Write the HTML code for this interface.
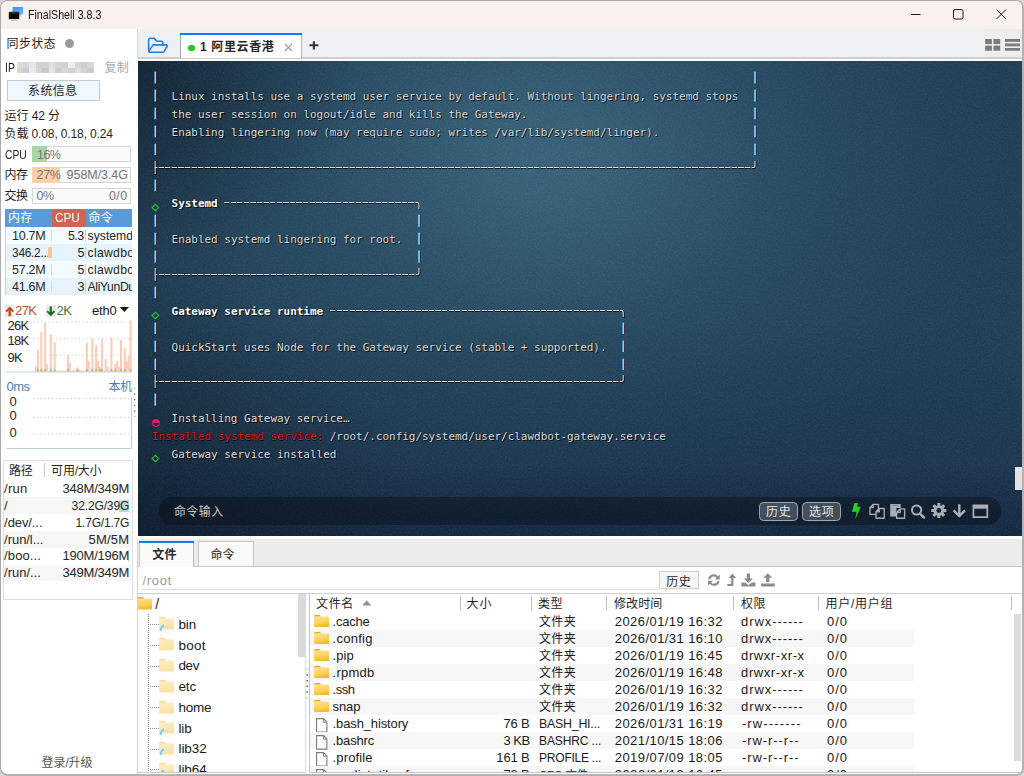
<!DOCTYPE html>
<html lang="zh-CN"><head><meta charset="utf-8"><title>FinalShell 3.8.3</title><style>
html,body{margin:0;padding:0}
body{width:1024px;height:776px;overflow:hidden;background:#d6d6d6;position:relative;
 font-family:"Liberation Sans","Noto Sans CJK SC",sans-serif;font-size:12.5px;color:#1e1e1e}
.a{position:absolute}
.t{position:absolute;white-space:pre;line-height:20px;height:20px;margin-left:-.4px}
.cj{font-size:12px}
.b{font-weight:bold}
svg{position:absolute;overflow:visible}
#win{position:absolute;left:0;top:0;width:1021px;height:773px;border:solid #a9a9a9;border-width:1px 2px 2px 1px;border-right-color:#b3b3b3;border-bottom-color:#b3b3b3;border-radius:8px;overflow:hidden;background:#fff}
#in{position:absolute;left:-1px;top:-1px;width:1024px;height:776px}
#title{left:0;top:0;width:1024px;height:29px;background:#f9f1ee}
#tabbar{left:138px;top:29px;width:886px;height:28px;background:#eff0f4}
#term{left:137.5px;top:61px;width:885px;height:475px;overflow:hidden;background:#1d3448}
.tl{position:absolute;left:14.3px;white-space:pre;font-family:"DejaVu Sans Mono","Liberation Mono",monospace;font-size:11px;line-height:18px;height:18px;color:#dedede;text-shadow:1px 1px 0 rgba(0,0,0,.75),0 0 1px rgba(0,0,0,.8);letter-spacing:-.032px}
.tl b{color:#fff}
.bx{color:#d9dadb}
.hz{color:#eceded;position:relative;top:-1px;display:inline-block;-webkit-mask-image:repeating-linear-gradient(90deg,#000 0,#000 5.3px,rgba(0,0,0,.3) 5.3px,rgba(0,0,0,.3) 6.588px);mask-image:repeating-linear-gradient(90deg,#000 0,#000 5.3px,rgba(0,0,0,.3) 5.3px,rgba(0,0,0,.3) 6.588px)}
.vp{color:#fff;display:inline-block;clip-path:inset(0 0 4.6px 0);-webkit-text-stroke:.18px #fff}
.dia{color:#2fbf2f;position:relative;top:4px;left:.3px;text-shadow:none;font-weight:bold;font-size:13.5px;margin:0 -.77px;line-height:1px}
.spin{color:#ee1a5e;position:relative;top:4px;left:.3px;text-shadow:none;font-size:12.4px;margin:0 -.44px;line-height:1px}
.red{color:#e01c1c}
</style></head><body><div id="win"><div id="in">
<div id="title" class="a"></div>
<svg style="left:8px;top:6px" width="17" height="17" viewBox="0 0 17 17">
<defs><linearGradient id="gb" x1="0" y1="0" x2="1" y2="1"><stop offset="0" stop-color="#2f8ef2"></stop><stop offset="1" stop-color="#6dbcfa"></stop></linearGradient>
<linearGradient id="gk" x1="0" y1="0" x2="0" y2="1"><stop offset="0" stop-color="#3a3a3a"></stop><stop offset=".5" stop-color="#000"></stop><stop offset="1" stop-color="#111"></stop></linearGradient></defs>
<rect x="4.6" y="1" width="10.5" height="7.4" fill="url(#gb)"></rect>
<rect x="11" y="8.4" width="3" height=".8" fill="#9cc8ee"></rect>
<rect x=".8" y="5.7" width="10.5" height="7.4" fill="url(#gk)"></rect>
<rect x="2.5" y="14" width="7" height="1" fill="#c9c6c4"></rect><rect x="5" y="13.1" width="2" height="1" fill="#d8d4d2"></rect>
</svg>
<div class="t " style="left: 28.3px; font-size: 12px; color: rgb(21, 21, 21); letter-spacing: 0px; transform-origin: 0px 50%; transform: scaleX(0.887); top: 4.8px;">FinalShell 3.8.3</div>
<svg style="left:905px;top:5px" width="110" height="20" viewBox="905 5 110 20" fill="none" stroke="#1c1c1c" stroke-width="1">
<path d="M910.7 14.5H920.6"></path>
<rect x="953.5" y="9.5" width="9.5" height="9.5" rx="1.6"></rect>
<path d="M996.5 9.5L1006 19M1006 9.5L996.5 19"></path></svg>
<div class="a" style="left:137px;top:29px;width:1px;height:29px;background:#dcdcdc"></div>
<div class="a" style="left:137px;top:540px;width:1px;height:236px;background:#d4d4d4"></div>
<div class="t cj" style="left: 7px; letter-spacing: 0.32px; top: 33.5px;">同步状态</div>
<div class="a" style="left:65px;top:39px;width:9px;height:9px;border-radius:5px;background:#9a9a9a"></div>
<div class="t " style="left: 5px; font-size: 12.5px; letter-spacing: 0px; transform-origin: 0px 50%; transform: scaleX(0.83); top: 57.8px;">IP</div>
<div class="a" style="left:16.5px;top:62px;width:77px;height:11px;overflow:hidden;filter:blur(.5px)"><div class="a" style="left:0.00px;top:0;width:6.6px;height:6px;background:#e3dcd6"></div><div class="a" style="left:0.00px;top:6px;width:6.6px;height:5px;background:#d8d2cc"></div><div class="a" style="left:6.45px;top:0;width:6.6px;height:6px;background:#d3d6da"></div><div class="a" style="left:6.45px;top:6px;width:6.6px;height:5px;background:#c9ced6"></div><div class="a" style="left:12.90px;top:0;width:6.6px;height:6px;background:#e6e6e8"></div><div class="a" style="left:12.90px;top:6px;width:6.6px;height:5px;background:#ecebe8"></div><div class="a" style="left:19.35px;top:0;width:6.6px;height:6px;background:#d6d0cd"></div><div class="a" style="left:19.35px;top:6px;width:6.6px;height:5px;background:#dcd6d2"></div><div class="a" style="left:25.80px;top:0;width:6.6px;height:6px;background:#cfd3d8"></div><div class="a" style="left:25.80px;top:6px;width:6.6px;height:5px;background:#c6c8ce"></div><div class="a" style="left:32.25px;top:0;width:6.6px;height:6px;background:#dfe0e2"></div><div class="a" style="left:32.25px;top:6px;width:6.6px;height:5px;background:#e4e6e6"></div><div class="a" style="left:38.70px;top:0;width:6.6px;height:6px;background:#d9d3cf"></div><div class="a" style="left:38.70px;top:6px;width:6.6px;height:5px;background:#cfcbc9"></div><div class="a" style="left:45.15px;top:0;width:6.6px;height:6px;background:#cfd2d4"></div><div class="a" style="left:45.15px;top:6px;width:6.6px;height:5px;background:#d6d8dc"></div><div class="a" style="left:51.60px;top:0;width:6.6px;height:6px;background:#eeeeec"></div><div class="a" style="left:51.60px;top:6px;width:6.6px;height:5px;background:#d2d2d2"></div><div class="a" style="left:58.05px;top:0;width:6.6px;height:6px;background:#d9d6d6"></div><div class="a" style="left:58.05px;top:6px;width:6.6px;height:5px;background:#dcdfe4"></div><div class="a" style="left:64.50px;top:0;width:6.6px;height:6px;background:#cfcfcf"></div><div class="a" style="left:64.50px;top:6px;width:6.6px;height:5px;background:#d8d4c8"></div><div class="a" style="left:70.95px;top:0;width:6.6px;height:6px;background:#d8d8dc"></div><div class="a" style="left:70.95px;top:6px;width:6.6px;height:5px;background:#c8ccd4"></div></div>
<div class="t cj" style="left: 105px; color: rgb(169, 169, 169); letter-spacing: 0.14px; top: 58px;">复制</div>
<div class="a" style="left:7px;top:80px;width:90.6px;height:19px;border:1px solid #c3c9cf;background:#eff8fe"></div>
<div class="t cj" style="left: 28.5px; letter-spacing: 0.32px; top: 81.3px;">系统信息</div>
<div class="t cj" style="left: 5px; letter-spacing: -0.1px; top: 106px;">运行 42 分</div>
<div class="t cj" style="left: 5px; letter-spacing: -0.13px; top: 124.3px;">负载 0.08, 0.18, 0.24</div>
<div class="t " style="left: 5px; font-size: 12.3px; letter-spacing: 0px; transform-origin: 0px 50%; transform: scaleX(0.839); top: 144.5px;">CPU</div><div class="a" style="left:32px;top:146px;width:96.8px;height:14px;border:1px solid #d6d6d6;background:#fafafa"></div><div class="a" style="left:32px;top:146px;width:15.2px;height:16px;background:#a6d7a8"></div><div class="t " style="left: 37.5px; color: rgb(117, 117, 117); letter-spacing: -0.58px; top: 144.5px;">16%</div>
<div class="t cj" style="left: 5px; letter-spacing: -0.61px; top: 165.2px;">内存</div><div class="a" style="left:32px;top:167px;width:96.8px;height:14px;border:1px solid #d6d6d6;background:#fafafa"></div><div class="a" style="left:32px;top:167px;width:27.5px;height:16px;background:#fdd0a9"></div><div class="t " style="left: 37px; color: rgb(117, 117, 117); letter-spacing: -0.41px; top: 165.2px;">27%</div><div class="t " style="left: 67px; color: rgb(117, 117, 117); letter-spacing: -0.06px; top: 165.2px;">958M/3.4G</div>
<div class="t cj" style="left: 5px; letter-spacing: -0.61px; top: 185.9px;">交换</div><div class="a" style="left:32px;top:187.6px;width:96.8px;height:14px;border:1px solid #d6d6d6;background:#fafafa"></div><div class="t " style="left: 37px; color: rgb(117, 117, 117); letter-spacing: -0.64px; top: 185.9px;">0%</div><div class="t " style="left: 109.5px; color: rgb(117, 117, 117); letter-spacing: 0.3px; top: 185.9px;">0/0</div>
<div class="a" style="left:5px;top:208.5px;width:127px;height:86px;background:#f4fbfe;box-shadow:inset 0 0 0 1px #b9d6ee"></div>
<div class="a" style="left:5px;top:208.5px;width:47px;height:18.5px;background:#5b9bd5"></div>
<div class="a" style="left:52px;top:208.5px;width:34px;height:18.5px;background:#cd6652"></div>
<div class="a" style="left:86px;top:208.5px;width:46px;height:18.5px;background:#5b9bd5"></div>
<div class="t cj" style="left: 8.5px; color: rgb(255, 255, 255); letter-spacing: 0.14px; top: 208.2px;">内存</div>
<div class="t " style="left: 55px; font-size: 12.5px; color: rgb(255, 255, 255); letter-spacing: 0px; transform-origin: 0px 50%; transform: scaleX(0.939); top: 208px;">CPU</div>
<div class="t cj" style="left: 89px; color: rgb(255, 255, 255); letter-spacing: 0.14px; top: 208.2px;">命令</div>
<div class="a" style="left:6px;top:227px;width:125.5px;height:17px;background:#f4fbfe"></div>
<div class="t " style="left: 12.5px; color: rgb(38, 38, 38); letter-spacing: -0.29px; top: 226.3px;">10.7M</div>
<div class="t " style="left: 68.5px; color: rgb(38, 38, 38); letter-spacing: -0.7px; top: 226.3px;">5.3</div>
<div class="a" style="left:51px;top:230px;width:1px;height:11px;background:#f8d5b8"></div>
<div class="a" style="left:85.3px;top:230px;width:1px;height:11px;background:#b5dcb6"></div>
<div class="a" style="left:88px;top:227px;width:43.5px;height:17px;overflow:hidden"><div class="t " style="left: 0px; font-size: 12.2px; color: rgb(38, 38, 38); letter-spacing: 0px; top: -0.7px;">systemd</div></div>
<div class="a" style="left:6px;top:244px;width:125.5px;height:17px;background:#e6f3fa"></div>
<div class="t " style="left: 12.5px; color: rgb(38, 38, 38); letter-spacing: -0.29px; font-size: 11.88px; top: 243.25px;">346.2...</div>
<div class="t " style="left: 78px; color: rgb(38, 38, 38); letter-spacing: -0.65px; top: 243.25px;">5</div>
<div class="a" style="left:48.3px;top:247px;width:3.7px;height:11px;background:#f6c79f"></div>
<div class="a" style="left:85.3px;top:247px;width:1px;height:11px;background:#b5dcb6"></div>
<div class="a" style="left:88px;top:244px;width:43.5px;height:17px;overflow:hidden"><div class="t " style="left: 0px; font-size: 12.2px; color: rgb(38, 38, 38); letter-spacing: 0.28px; top: -0.75px;">clawdbot</div></div>
<div class="a" style="left:6px;top:261px;width:125.5px;height:17px;background:#f4fbfe"></div>
<div class="t " style="left: 12.5px; color: rgb(38, 38, 38); letter-spacing: -0.29px; top: 260.2px;">57.2M</div>
<div class="t " style="left: 78px; color: rgb(38, 38, 38); letter-spacing: -0.65px; top: 260.2px;">5</div>
<div class="a" style="left:51px;top:264px;width:1px;height:11px;background:#f8d5b8"></div>
<div class="a" style="left:85.3px;top:264px;width:1px;height:11px;background:#b5dcb6"></div>
<div class="a" style="left:88px;top:261px;width:43.5px;height:17px;overflow:hidden"><div class="t " style="left: 0px; font-size: 12.2px; color: rgb(38, 38, 38); letter-spacing: 0.28px; top: -0.8px;">clawdbot</div></div>
<div class="a" style="left:6px;top:278px;width:125.5px;height:17px;background:#e6f3fa"></div>
<div class="t " style="left: 12.5px; color: rgb(38, 38, 38); letter-spacing: -0.29px; top: 277.15px;">41.6M</div>
<div class="t " style="left: 78px; color: rgb(38, 38, 38); letter-spacing: -0.65px; top: 277.15px;">3</div>
<div class="a" style="left:51px;top:281px;width:1px;height:11px;background:#f8d5b8"></div>
<div class="a" style="left:85.3px;top:281px;width:1px;height:11px;background:#b5dcb6"></div>
<div class="a" style="left:88px;top:278px;width:43.5px;height:17px;overflow:hidden"><div class="t " style="left: 0px; font-size: 12.2px; color: rgb(38, 38, 38); letter-spacing: -0.38px; top: -0.85px;">AliYunDun</div></div>
<div class="a" style="left:5px;top:305.3px;width:9.3px;height:11.3px;background:#e9e9e9"></div>
<svg style="left:5px;top:305px" width="10" height="12" viewBox="0 0 10 12"><path d="M4.7 1.4L9 5.9L7.7 7.2L5.8 5.3V11.3H3.6V5.3L1.7 7.2L.4 5.9Z" fill="#c2410c"></path></svg>
<div class="t " style="left: 15.5px; font-size: 13px; color: rgb(180, 83, 47); letter-spacing: -0.61px; top: 300.8px;">27K</div>
<div class="a" style="left:46px;top:305.3px;width:9.5px;height:11.3px;background:#e9e9e9"></div>
<svg style="left:46px;top:305px" width="10" height="12" viewBox="0 0 10 12"><path d="M4.8 11.2L9.1 6.7L7.8 5.4L5.9 7.3V1.5H3.7V7.3L1.8 5.4L.5 6.7Z" fill="#1c6b1c"></path></svg>
<div class="t " style="left: 57px; font-size: 13px; color: rgb(59, 124, 59); letter-spacing: -0.55px; top: 300.8px;">2K</div>
<div class="t " style="left: 92.5px; font-size: 13px; color: rgb(26, 26, 26); letter-spacing: -0.25px; top: 300.8px;">eth0</div>
<svg style="left:119px;top:306px" width="11" height="7" viewBox="0 0 11 7"><path d="M.6 .9H10L5.3 5.9Z" fill="#1a1a1a"></path></svg>
<div class="t " style="left: 8px; font-size: 13px; color: rgb(38, 38, 38); letter-spacing: -0.78px; top: 315.9px;">26K</div>
<div class="t " style="left: 8px; font-size: 13px; color: rgb(38, 38, 38); letter-spacing: -0.78px; top: 331.2px;">18K</div>
<div class="t " style="left: 8px; font-size: 13px; color: rgb(38, 38, 38); letter-spacing: -0.8px; top: 347.6px;">9K</div>
<svg style="left:0;top:295px" width="138" height="80" viewBox="0 0 138 80"><path d="M33.5 27H130" stroke="#c4c4c4" stroke-width="1" stroke-dasharray="1 2.8"></path><path d="M33.5 43.8H130" stroke="#c4c4c4" stroke-width="1" stroke-dasharray="1 2.8"></path><path d="M33.5 60.2H130" stroke="#c4c4c4" stroke-width="1" stroke-dasharray="1 2.8"></path><rect x="34.9" y="75.47" width="96.7" height="1.37" fill="#fdd3bf"></rect><rect x="34.86" y="71.10" width="1.95" height="5.74" fill="#fccbb3"></rect><rect x="36.92" y="54.69" width="1.95" height="22.15" fill="#fccbb3"></rect><rect x="40.33" y="36.92" width="1.95" height="39.92" fill="#fccbb3"></rect><rect x="44.16" y="28.03" width="1.95" height="48.81" fill="#fccbb3"></rect><rect x="46.21" y="69.05" width="1.95" height="7.79" fill="#fccbb3"></rect><rect x="49.90" y="39.65" width="1.95" height="37.19" fill="#fccbb3"></rect><rect x="53.73" y="47.17" width="1.95" height="29.67" fill="#fccbb3"></rect><rect x="66.99" y="59.47" width="1.95" height="17.36" fill="#fccbb3"></rect><rect x="68.77" y="67.95" width="1.95" height="8.89" fill="#fccbb3"></rect><rect x="72.46" y="74.51" width="1.95" height="2.32" fill="#fccbb3"></rect><rect x="76.29" y="72.46" width="1.95" height="4.38" fill="#fccbb3"></rect><rect x="78.21" y="74.51" width="1.95" height="2.32" fill="#fccbb3"></rect><rect x="85.86" y="47.85" width="1.95" height="28.99" fill="#fccbb3"></rect><rect x="87.78" y="66.04" width="1.95" height="10.80" fill="#fccbb3"></rect><rect x="91.33" y="43.48" width="1.95" height="33.36" fill="#fccbb3"></rect><rect x="95.16" y="49.90" width="1.95" height="26.93" fill="#fccbb3"></rect><rect x="97.07" y="66.04" width="1.95" height="10.80" fill="#fccbb3"></rect><rect x="98.99" y="71.78" width="1.95" height="5.06" fill="#fccbb3"></rect><rect x="100.90" y="44.16" width="1.95" height="32.68" fill="#fccbb3"></rect><rect x="104.73" y="63.99" width="1.95" height="12.85" fill="#fccbb3"></rect><rect x="106.64" y="71.78" width="1.95" height="5.06" fill="#fccbb3"></rect><rect x="110.47" y="42.66" width="1.95" height="34.18" fill="#fccbb3"></rect><rect x="114.30" y="69.05" width="1.95" height="7.79" fill="#fccbb3"></rect><rect x="116.22" y="66.04" width="1.95" height="10.80" fill="#fccbb3"></rect><rect x="118.13" y="71.78" width="1.95" height="5.06" fill="#fccbb3"></rect><rect x="120.04" y="45.12" width="1.95" height="31.72" fill="#fccbb3"></rect><rect x="123.87" y="52.91" width="1.95" height="23.93" fill="#fccbb3"></rect><rect x="125.79" y="66.04" width="1.95" height="10.80" fill="#fccbb3"></rect><rect x="127.70" y="61.12" width="1.95" height="15.72" fill="#fccbb3"></rect><rect x="129.61" y="25.29" width="1.95" height="51.54" fill="#fccbb3"></rect><rect x="36.92" y="73.83" width="1.95" height="3.01" fill="#c2b781"></rect><rect x="40.33" y="73.83" width="1.95" height="3.01" fill="#c2b781"></rect><rect x="44.16" y="73.83" width="1.95" height="3.01" fill="#c2b781"></rect><rect x="49.90" y="73.83" width="1.95" height="3.01" fill="#c2b781"></rect><rect x="53.73" y="73.83" width="1.95" height="3.01" fill="#c2b781"></rect><rect x="66.99" y="73.83" width="1.95" height="3.01" fill="#c2b781"></rect><rect x="85.86" y="73.83" width="1.95" height="3.01" fill="#c2b781"></rect><rect x="91.33" y="73.83" width="1.95" height="3.01" fill="#c2b781"></rect><rect x="95.16" y="73.83" width="1.95" height="3.01" fill="#c2b781"></rect><rect x="100.90" y="73.83" width="1.95" height="3.01" fill="#c2b781"></rect><rect x="110.47" y="73.83" width="1.95" height="3.01" fill="#c2b781"></rect><rect x="114.30" y="73.83" width="1.95" height="3.01" fill="#c2b781"></rect><rect x="120.04" y="73.83" width="1.95" height="3.01" fill="#c2b781"></rect><rect x="123.87" y="73.83" width="1.95" height="3.01" fill="#c2b781"></rect><rect x="129.61" y="73.83" width="1.95" height="3.01" fill="#c2b781"></rect><rect x="76.29" y="73.83" width="1.95" height="3.01" fill="#c2b781"></rect><rect x="98.99" y="73.83" width="1.95" height="3.01" fill="#c2b781"></rect><path d="M5 77H132" stroke="#bdd9e8" stroke-width="1"></path></svg>
<div class="t " style="left: 7px; font-size: 13px; color: rgb(76, 126, 179); letter-spacing: -0.59px; top: 377px;">0ms</div>
<div class="t cj" style="left: 109px; color: rgb(76, 126, 179); letter-spacing: -0.36px; top: 376.6px;">本机</div>
<div class="t " style="left: 10px; font-size: 13px; color: rgb(38, 38, 38); letter-spacing: 0.07px; top: 391.8px;">0</div>
<div class="t " style="left: 10px; font-size: 13px; color: rgb(38, 38, 38); letter-spacing: 0.07px; top: 405.9px;">0</div>
<div class="t " style="left: 10px; font-size: 13px; color: rgb(38, 38, 38); letter-spacing: 0.07px; top: 423px;">0</div>
<svg style="left:0;top:380px" width="138" height="72" viewBox="0 380 138 72"><path d="M33 398.5H129.5" stroke="#c4c4c4" stroke-width="1" stroke-dasharray="1 2.8"></path><path d="M33 417.3H129.5" stroke="#c4c4c4" stroke-width="1" stroke-dasharray="1 2.8"></path><path d="M33 434H129.5" stroke="#c4c4c4" stroke-width="1" stroke-dasharray="1 2.8"></path><path d="M131.5 397V448.5H6.5" stroke="#b9cddb" stroke-width="1" fill="none"></path><rect x="133.9" y="387.7" width="1.4" height="1.4" fill="#c0c0c0"></rect><rect x="133.9" y="393.4" width="1.4" height="1.4" fill="#6a6a6a"></rect><rect x="133.9" y="399.0" width="1.4" height="1.4" fill="#6a6a6a"></rect><rect x="133.9" y="404.7" width="1.4" height="1.4" fill="#6a6a6a"></rect><rect x="133.9" y="410.29999999999995" width="1.4" height="1.4" fill="#6a6a6a"></rect><rect x="133.9" y="415.9" width="1.4" height="1.4" fill="#c0c0c0"></rect></svg>
<div class="a" style="left:2.5px;top:460.4px;width:128.5px;height:137.6px;border:1px solid #dedede"></div>
<div class="a" style="left:44.3px;top:463px;width:1px;height:14px;background:#c9c9c9"></div>
<div class="t cj" style="left: 9.5px; color: rgb(38, 38, 38); letter-spacing: -0.36px; top: 461px;">路径</div>
<div class="t cj" style="left: 51.5px; color: rgb(38, 38, 38); letter-spacing: -0.21px; top: 461px;">可用/大小</div>
<div class="t " style="left: 4.5px; font-size: 13px; color: rgb(38, 38, 38); letter-spacing: 0.22px; top: 479.2px;">/run</div>
<div class="t " style="left: 63px; font-size: 13px; color: rgb(38, 38, 38); letter-spacing: -0.23px; top: 479.2px;">348M/349M</div>
<div class="a" style="left:3.5px;top:497.4px;width:128px;height:16.8px;background:#f6f6f6"></div>
<div class="a" style="left:118.5px;top:499.5px;width:10.5px;height:12.5px;background:#bbd9d2"></div>
<div class="t " style="left: 4.5px; font-size: 13px; color: rgb(38, 38, 38); letter-spacing: 1.67px; top: 496px;">/</div>
<div class="t " style="left: 72px; font-size: 12.05px; color: rgb(38, 38, 38); letter-spacing: -0.15px; top: 496px;">32.2G/39G</div>
<div class="t " style="left: 4.5px; font-size: 13px; color: rgb(38, 38, 38); letter-spacing: -0.09px; top: 512.8px;">/dev/...</div>
<div class="t " style="left: 76px; font-size: 12.05px; color: rgb(38, 38, 38); letter-spacing: -0.22px; top: 512.8px;">1.7G/1.7G</div>
<div class="a" style="left:3.5px;top:531.0px;width:128px;height:16.8px;background:#f6f6f6"></div>
<div class="t " style="left: 4.5px; font-size: 13px; color: rgb(38, 38, 38); letter-spacing: -0.05px; top: 529.6px;">/run/l...</div>
<div class="t " style="left: 89px; font-size: 13px; color: rgb(38, 38, 38); letter-spacing: 0.17px; top: 529.6px;">5M/5M</div>
<div class="a" style="left:128.2px;top:549.8px;width:.8px;height:12.5px;background:#bbd9d2"></div>
<div class="t " style="left: 4.5px; font-size: 13px; color: rgb(38, 38, 38); letter-spacing: 0.09px; top: 546.4px;">/boo...</div>
<div class="t " style="left: 63px; font-size: 13px; color: rgb(38, 38, 38); letter-spacing: -0.23px; top: 546.4px;">190M/196M</div>
<div class="a" style="left:3.5px;top:564.6px;width:128px;height:16.8px;background:#f6f6f6"></div>
<div class="t " style="left: 4.5px; font-size: 13px; color: rgb(38, 38, 38); letter-spacing: -0.01px; top: 563.2px;">/run/...</div>
<div class="t " style="left: 63px; font-size: 13px; color: rgb(38, 38, 38); letter-spacing: -0.23px; top: 563.2px;">349M/349M</div>
<div class="t cj" style="left: 42px; color: rgb(85, 85, 85); letter-spacing: -0.11px; top: 752.7px;">登录/升级</div>
<div id="tabbar" class="a"></div>
<div class="a" style="left:984px;top:29px;width:40px;height:28px;background:#eeeeee"></div>
<div class="a" style="left:138px;top:57px;width:886px;height:1.6px;background:#cfcfcf"></div>
<svg style="left:146px;top:36px" width="24" height="19" viewBox="146 36 24 19" fill="none" stroke="#1f80e2" stroke-width="1.6" stroke-linejoin="round" stroke-linecap="round">
<path d="M148.6 50.8V40A1.7 1.7 0 0 1 150.3 38.3H154.2L156.8 41.3H161.2A1.7 1.7 0 0 1 162.9 43V44.7"></path>
<path d="M153.9 44.9H166.4A.9 .9 0 0 1 167.2 46.2L164 51.6A1.5 1.5 0 0 1 162.8 52.3H150A1.1 1.1 0 0 1 149.1 50.7L152.6 45.6A1.5 1.5 0 0 1 153.9 44.9Z"></path>
</svg>
<div class="a" style="left:180.3px;top:33px;width:121.4px;height:25.3px;background:#fff;box-shadow:inset 1px 0 0 #a9a9a9,inset -1px 0 0 #b5b5b5"></div>
<div class="a" style="left:180.3px;top:32.9px;width:121.4px;height:1.9px;background:#0b7df0"></div>
<div class="a" style="left:188.4px;top:44.9px;width:6.6px;height:6.6px;border-radius:4px;background:#1ec81e"></div>
<div class="t b" style="left: 200.5px; font-size: 12px; color: rgb(38, 38, 38); letter-spacing: 0.61px; top: 36.6px;">1 阿里云香港</div>
<svg style="left:284px;top:43px" width="9" height="9" viewBox="0 0 9 9"><path d="M.9 .9L8 8M8 .9L.9 8" stroke="#9a9a9a" stroke-width="1.1" fill="none"></path></svg>
<svg style="left:309px;top:41px" width="10" height="9" viewBox="0 0 10 9"><path d="M4.9 .2V8.4M.5 4.3H9.4" stroke="#333" stroke-width="2.1" fill="none"></path></svg>
<svg style="left:985px;top:38px" width="36" height="13" viewBox="985 38 36 13" fill="#7b7b7b">
<rect x="985.2" y="39" width="6.7" height="5.1"></rect><rect x="993.5" y="39" width="6.7" height="5.1"></rect>
<rect x="985.2" y="45.6" width="6.7" height="5.1"></rect><rect x="993.5" y="45.6" width="6.7" height="5.1"></rect>
<rect x="1005" y="39" width="15" height="2.8"></rect><rect x="1005" y="43.5" width="15" height="2.8"></rect><rect x="1005" y="48" width="15" height="2.7"></rect></svg>
<div id="term" class="a"><div class="a" style="left:0;top:0;width:885px;height:475px;background:radial-gradient(ellipse 220px 200px at 0 0,rgba(8,14,22,.46),rgba(8,14,22,0)),radial-gradient(ellipse 280px 260px at 0 100%,rgba(8,14,22,.36),rgba(8,14,22,0)),linear-gradient(to right,rgba(10,18,28,.12),rgba(10,18,28,0) 120px),linear-gradient(to bottom,rgba(6,16,42,0) 400px,rgba(6,16,42,.28) 475px),linear-gradient(to bottom,rgba(10,22,50,0) 260px,rgba(10,22,50,.3) 475px),radial-gradient(ellipse 465px 335px at 408px 100px,rgb(60,103,127) 0,rgb(57,98,121) 15%,rgb(52,90,113) 30%,rgb(43,78,101) 52%,rgb(38,70,93) 80%,rgb(36,66,88) 100%)"></div><svg style="left:0;top:0;opacity:.06" width="885" height="475"><filter id="nz" x="0" y="0" width="100%" height="100%" color-interpolation-filters="sRGB"><feTurbulence type="fractalNoise" baseFrequency=".55" numOctaves="2" seed="7"></feTurbulence><feColorMatrix type="matrix" values="1.3 0 0 0 -.5  1.3 0 0 0 -.4  1.3 0 0 0 -.32  0 0 0 0 1"></feColorMatrix></filter><rect width="885" height="475" filter="url(#nz)"></rect></svg><div class="tl" style="top: 9.1px;"><span class="vp">│</span>                                                                                          <span class="vp">│</span></div><div class="tl" style="top: 27px;"><span class="vp">│</span>  Linux installs use a systemd user service by default. Without lingering, systemd stops  <span class="vp">│</span></div><div class="tl" style="top: 44.9px;"><span class="vp">│</span>  the user session on logout/idle and kills the Gateway.                                  <span class="vp">│</span></div><div class="tl" style="top: 62.8px;"><span class="vp">│</span>  Enabling lingering now (may require sudo; writes /var/lib/systemd/linger).              <span class="vp">│</span></div><div class="tl" style="top: 80.7px;"><span class="vp">│</span>                                                                                          <span class="vp">│</span></div><div class="tl" style="top: 98.6px;"><span class="hz">├──────────────────────────────────────────────────────────────────────────────────────────╯</span></div><div class="tl" style="top: 116.5px;"><span class="vp">│</span></div><div class="tl" style="top: 134.4px;"><span class="dia">◇</span>  <b>Systemd</b> <span class="hz">─────────────────────────────╮</span></div><div class="tl" style="top: 152.3px;"><span class="vp">│</span>                                       <span class="vp">│</span></div><div class="tl" style="top: 170.2px;"><span class="vp">│</span>  Enabled systemd lingering for root.  <span class="vp">│</span></div><div class="tl" style="top: 188.1px;"><span class="vp">│</span>                                       <span class="vp">│</span></div><div class="tl" style="top: 206px;"><span class="hz">├───────────────────────────────────────╯</span></div><div class="tl" style="top: 223.9px;"><span class="vp">│</span></div><div class="tl" style="top: 241.8px;"><span class="dia">◇</span>  <b>Gateway service runtime</b> <span class="hz">────────────────────────────────────────────╮</span></div><div class="tl" style="top: 259.7px;"><span class="vp">│</span>                                                                      <span class="vp">│</span></div><div class="tl" style="top: 277.6px;"><span class="vp">│</span>  QuickStart uses Node for the Gateway service (stable + supported).  <span class="vp">│</span></div><div class="tl" style="top: 295.5px;"><span class="vp">│</span>                                                                      <span class="vp">│</span></div><div class="tl" style="top: 313.4px;"><span class="hz">├──────────────────────────────────────────────────────────────────────╯</span></div><div class="tl" style="top: 331.3px;"><span class="vp">│</span></div><div class="tl" style="top: 349.2px;"><span class="spin">◓</span>  Installing Gateway service…</div><div class="tl" style="top: 367.1px;"><span class="red">Installed systemd service:</span> /root/.config/systemd/user/clawdbot-gateway.service</div><div class="tl" style="top: 385px;"><span class="dia">◇</span>  Gateway service installed</div><div class="a" style="left:877px;top:406px;width:7.5px;height:23px;background:#e2e2e2"></div><div class="a" style="left:21.6px;top:436.2px;width:841.5px;height:27.4px;border-radius:13px;background:rgba(6,12,20,.42)"></div></div>
<div class="t cj" style="left: 174.3px; color: rgb(201, 201, 201); letter-spacing: 0.45px; top: 502.2px;">命令输入</div>
<div class="a" style="left:758.9px;top:502px;width:37.3px;height:16.7px;border:1px solid #a3a7ab;border-radius:4.5px;background:rgba(190,200,210,.28)"></div>
<div class="t cj" style="left: 766.3px; color: rgb(230, 230, 230); letter-spacing: 0.89px; top: 502.2px;">历史</div>
<div class="a" style="left:801.8px;top:502px;width:37.4px;height:16.7px;border:1px solid #a3a7ab;border-radius:4.5px;background:rgba(190,200,210,.28)"></div>
<div class="t cj" style="left: 809.3px; color: rgb(230, 230, 230); letter-spacing: 0.89px; top: 502.2px;">选项</div>
<svg style="left:850px;top:502px" width="140" height="18" viewBox="850 502 140 18">
<path d="M854.2 503.3L858.1 503L857 507.1L860.9 506.8L855.2 519.4L856.6 511.8L852 512.1Z" fill="#1fd21f"></path>
<g fill="none" stroke="#a9aeb6" stroke-width="1.35" stroke-linejoin="round">
<path d="M873.2 504.3H878.4V514.3H870V507.5ZM873.2 504.3V507.5H870"></path>
<path d="M879.2 508.5H884.2V518.2H876V511.7ZM879.2 508.5V511.7H876" fill="#111f2d"></path>
</g>
<path d="M890.2 504H900.7V508H896.4V516.6H890.2Z" fill="#a9aeb6"></path><rect x="892.6" y="504.7" width="5.8" height="1.1" fill="#878c94"></rect>
<path d="M900.2 508.9H904.6V518.2H896.6V512.5ZM900.2 508.9V512.5H896.6" fill="#111f2d" stroke="#a9aeb6" stroke-width="1.35" stroke-linejoin="round"></path>
<circle cx="916.6" cy="510" r="4.6" fill="none" stroke="#a9aeb6" stroke-width="2"></circle><path d="M920 513.6L924 517.6" stroke="#a9aeb6" stroke-width="2.4" stroke-linecap="round"></path>
<g transform="translate(938.8 510.5)" fill="#a9aeb6">
<circle r="5.3"></circle>
<rect x="-1.5" y="-7.6" width="3" height="15.2" rx=".5"></rect>
<rect x="-1.5" y="-7.6" width="3" height="15.2" rx=".5" transform="rotate(45)"></rect><rect x="-1.5" y="-7.6" width="3" height="15.2" rx=".5" transform="rotate(90)"></rect><rect x="-1.5" y="-7.6" width="3" height="15.2" rx=".5" transform="rotate(135)"></rect>
<circle r="2.4" fill="#111f2d"></circle></g>
<path d="M959.3 504.3V515.6M953.6 510.4L959.3 516L965 510.4" fill="none" stroke="#a9aeb6" stroke-width="2.4"></path>
<path d="M973.4 505.4H987.3V517.1H973.4Z" fill="none" stroke="#a9aeb6" stroke-width="1.7"></path><rect x="973.4" y="505.4" width="13.9" height="3.3" fill="#a9aeb6"></rect>
</svg>
<div class="a" style="left:138px;top:539.2px;width:886px;height:26.8px;background:#ececec"></div>
<div class="a" style="left:138px;top:566px;width:886px;height:1px;background:#c9c9c9"></div>
<div class="a" style="left:139px;top:541.3px;width:55.3px;height:25.7px;background:#fafafa;box-shadow:inset 1px 0 0 #c9c9c9,inset -1px 0 0 #b9b9b9"></div>
<div class="a" style="left:139px;top:541.2px;width:55.3px;height:1.8px;background:#0b7df0"></div>
<div class="a" style="left:197.5px;top:541.3px;width:54.2px;height:24.2px;background:#fafafa;border:1px solid #c6c6c6;border-bottom:none"></div>
<div class="t b" style="left: 152.6px; font-size: 12px; color: rgb(42, 42, 42); letter-spacing: 0.19px; top: 544.7px;">文件</div>
<div class="t " style="left: 210.8px; font-size: 12px; color: rgb(68, 68, 68); font-weight: 500; letter-spacing: 0.19px; top: 544.7px;">命令</div>
<div class="t " style="left: 142.8px; font-size: 13px; color: rgb(155, 155, 155); letter-spacing: 0.76px; top: 571px;">/root</div>
<div class="a" style="left:141px;top:589px;width:518px;height:1px;background:#dddddd"></div>
<div class="a" style="left:659.2px;top:571.3px;width:37.8px;height:16.2px;border:1px solid #cfcfcf;background:#f5f5f5"></div>
<div class="t cj" style="left: 666.6px; color: rgb(42, 42, 42); letter-spacing: 0.59px; top: 571.6px;">历史</div>
<svg style="left:705px;top:572px" width="72" height="16" viewBox="705 572 72 16" fill="#8b8b8b">
<path d="M708.2 579.2A5.6 5.6 0 0 1 718 576.3L719.7 574.6V579.4H714.9L716.6 577.7A3.7 3.7 0 0 0 710.2 579.2ZM719.5 580.9A5.6 5.6 0 0 1 709.7 583.8L708 585.5V580.7H712.8L711.1 582.4A3.7 3.7 0 0 0 717.5 580.9Z"></path>
<path d="M732.3 573.4L736 578H733.4V586H727.3V584H731.2V578H728.6Z"></path>
<path d="M746.8 573.6H750V578.6H752.9L748.4 583.2L743.9 578.6H746.8ZM741.4 582.6H745.3L748.4 585.2L751.5 582.6H755.4V586.4H741.4Z"></path>
<path d="M766.2 582.2H769.4V577.7H772.3L767.8 573.2L763.3 577.7H766.2ZM761 583.6H774.8V586.4H761Z"></path>
</svg>
<div class="a" style="left:138px;top:593.2px;width:167.3px;height:178.2px;border:1px solid #c8c8c8;border-left:none;border-right-color:#dcdcdc;background:#fff;overflow:hidden" id="tree"></div>
<svg width="0" height="0" style="left:0;top:0"><defs>
<linearGradient id="fd" x1="0" y1="0" x2=".3" y2="1"><stop offset="0" stop-color="#ffe59a"></stop><stop offset=".75" stop-color="#fbcb4e"></stop><stop offset="1" stop-color="#f6b92e"></stop></linearGradient>
<linearGradient id="fl" x1="0" y1="0" x2=".3" y2="1"><stop offset="0" stop-color="#feeec8"></stop><stop offset="1" stop-color="#fce2a2"></stop></linearGradient>
</defs></svg>
<div class="a" style="left:138px;top:594px;width:168px;height:178.2px;overflow:hidden">
<svg style="left:-0.6999999999999886px;top:3px" width="15" height="13" viewBox="0 0 15 13"><path d="M0 1.2A1.2 1.2 0 0 1 1.2 0H5.8L7.3 1.9H0Z" fill="#f0a80e"></path><rect x="0" y="1.6" width="15" height="10.8" rx="1" fill="url(#fd)"></rect></svg>
</div>
<div class="t " style="left: 155.6px; font-size: 14px; color: rgb(26, 26, 26); letter-spacing: 2.31px; top: 593.6px;">/</div>
<div class="a" style="left:138px;top:594px;width:160.3px;height:178.2px;overflow:hidden">
<svg style="left:0;top:0" width="160" height="179" viewBox="138 594 160 179"><path d="M148.5 614V773" stroke="#8c8c8c" stroke-width="1" stroke-dasharray="1 1"></path><path d="M150 624.5H159" stroke="#8c8c8c" stroke-width="1" stroke-dasharray="1 1"></path><path d="M150 645.5H159" stroke="#8c8c8c" stroke-width="1" stroke-dasharray="1 1"></path><path d="M150 666.5H159" stroke="#8c8c8c" stroke-width="1" stroke-dasharray="1 1"></path><path d="M150 686.5H159" stroke="#8c8c8c" stroke-width="1" stroke-dasharray="1 1"></path><path d="M150 707.5H159" stroke="#8c8c8c" stroke-width="1" stroke-dasharray="1 1"></path><path d="M150 728.5H159" stroke="#8c8c8c" stroke-width="1" stroke-dasharray="1 1"></path><path d="M150 749.5H159" stroke="#8c8c8c" stroke-width="1" stroke-dasharray="1 1"></path><path d="M150 769.5H159" stroke="#8c8c8c" stroke-width="1" stroke-dasharray="1 1"></path></svg>
<svg style="left:21.3px;top:23.4px" width="15" height="13" viewBox="0 0 15 13"><path d="M0 1.2A1.2 1.2 0 0 1 1.2 0H5.8L7.3 1.9H0Z" fill="#fbdb93"></path><rect x="0" y="1.6" width="15" height="10.8" rx="1" fill="url(#fl)"></rect></svg>
<svg style="left:21.2px;top:29.7px" width="6" height="8" viewBox="0 0 6 8"><path d="M1.9 .2L5.6 .5L5.3 4.2L4.2 3.2C3.2 4.2 2.8 5.5 3 7.4L.5 7C.2 4.8 1.1 3 2.7 1.4Z" fill="#7cc2f4" stroke="#fff" stroke-width=".5"></path></svg>
<svg style="left:21.3px;top:44.2px" width="15" height="13" viewBox="0 0 15 13"><path d="M0 1.2A1.2 1.2 0 0 1 1.2 0H5.8L7.3 1.9H0Z" fill="#fbdb93"></path><rect x="0" y="1.6" width="15" height="10.8" rx="1" fill="url(#fl)"></rect></svg>
<svg style="left:21.3px;top:65.0px" width="15" height="13" viewBox="0 0 15 13"><path d="M0 1.2A1.2 1.2 0 0 1 1.2 0H5.8L7.3 1.9H0Z" fill="#fbdb93"></path><rect x="0" y="1.6" width="15" height="10.8" rx="1" fill="url(#fl)"></rect></svg>
<svg style="left:21.3px;top:85.7px" width="15" height="13" viewBox="0 0 15 13"><path d="M0 1.2A1.2 1.2 0 0 1 1.2 0H5.8L7.3 1.9H0Z" fill="#fbdb93"></path><rect x="0" y="1.6" width="15" height="10.8" rx="1" fill="url(#fl)"></rect></svg>
<svg style="left:21.3px;top:106.5px" width="15" height="13" viewBox="0 0 15 13"><path d="M0 1.2A1.2 1.2 0 0 1 1.2 0H5.8L7.3 1.9H0Z" fill="#fbdb93"></path><rect x="0" y="1.6" width="15" height="10.8" rx="1" fill="url(#fl)"></rect></svg>
<svg style="left:21.3px;top:127.3px" width="15" height="13" viewBox="0 0 15 13"><path d="M0 1.2A1.2 1.2 0 0 1 1.2 0H5.8L7.3 1.9H0Z" fill="#fbdb93"></path><rect x="0" y="1.6" width="15" height="10.8" rx="1" fill="url(#fl)"></rect></svg>
<svg style="left:21.2px;top:133.6px" width="6" height="8" viewBox="0 0 6 8"><path d="M1.9 .2L5.6 .5L5.3 4.2L4.2 3.2C3.2 4.2 2.8 5.5 3 7.4L.5 7C.2 4.8 1.1 3 2.7 1.4Z" fill="#7cc2f4" stroke="#fff" stroke-width=".5"></path></svg>
<svg style="left:21.3px;top:148.1px" width="15" height="13" viewBox="0 0 15 13"><path d="M0 1.2A1.2 1.2 0 0 1 1.2 0H5.8L7.3 1.9H0Z" fill="#fbdb93"></path><rect x="0" y="1.6" width="15" height="10.8" rx="1" fill="url(#fl)"></rect></svg>
<svg style="left:21.2px;top:154.4px" width="6" height="8" viewBox="0 0 6 8"><path d="M1.9 .2L5.6 .5L5.3 4.2L4.2 3.2C3.2 4.2 2.8 5.5 3 7.4L.5 7C.2 4.8 1.1 3 2.7 1.4Z" fill="#7cc2f4" stroke="#fff" stroke-width=".5"></path></svg>
<svg style="left:21.3px;top:168.9px" width="15" height="13" viewBox="0 0 15 13"><path d="M0 1.2A1.2 1.2 0 0 1 1.2 0H5.8L7.3 1.9H0Z" fill="#fbdb93"></path><rect x="0" y="1.6" width="15" height="10.8" rx="1" fill="url(#fl)"></rect></svg>
<svg style="left:21.2px;top:175.2px" width="6" height="8" viewBox="0 0 6 8"><path d="M1.9 .2L5.6 .5L5.3 4.2L4.2 3.2C3.2 4.2 2.8 5.5 3 7.4L.5 7C.2 4.8 1.1 3 2.7 1.4Z" fill="#7cc2f4" stroke="#fff" stroke-width=".5"></path></svg>
</div>
<div class="a" style="left:138px;top:594px;width:160.3px;height:178.2px;overflow:hidden">
<div class="t " style="left: 40.8px; font-size: 13.5px; color: rgb(26, 26, 26); letter-spacing: -0.07px; top: 20.8px;">bin</div>
<div class="t " style="left: 40.8px; font-size: 13.5px; color: rgb(26, 26, 26); letter-spacing: 0.28px; top: 41.58px;">boot</div>
<div class="t " style="left: 40.8px; font-size: 13.5px; color: rgb(26, 26, 26); letter-spacing: -0.33px; top: 62.36px;">dev</div>
<div class="t " style="left: 40.8px; font-size: 13.5px; color: rgb(26, 26, 26); letter-spacing: -0.07px; top: 83.14px;">etc</div>
<div class="t " style="left: 40.8px; font-size: 13.5px; color: rgb(26, 26, 26); letter-spacing: -0.2px; top: 103.92px;">home</div>
<div class="t " style="left: 40.8px; font-size: 13.5px; color: rgb(26, 26, 26); letter-spacing: -0.04px; top: 124.7px;">lib</div>
<div class="t " style="left: 40.8px; font-size: 13.5px; color: rgb(26, 26, 26); letter-spacing: -0.03px; top: 145.48px;">lib32</div>
<div class="t " style="left: 40.8px; font-size: 13.5px; color: rgb(26, 26, 26); letter-spacing: -0.03px; top: 166.26px;">lib64</div>
</div>
<div class="a" style="left:298.3px;top:594.2px;width:7.2px;height:63.3px;background:#dadada"></div>
<svg style="left:305px;top:660px" width="5" height="40" viewBox="305 660 5 40"><rect x="306.5" y="668.5" width="1.5" height="1.5" fill="#cfcfcf"></rect><rect x="306.5" y="674.1999999999999" width="1.5" height="1.5" fill="#5a5a5a"></rect><rect x="306.5" y="679.9" width="1.5" height="1.5" fill="#5a5a5a"></rect><rect x="306.5" y="685.5999999999999" width="1.5" height="1.5" fill="#5a5a5a"></rect><rect x="306.5" y="691.3" width="1.5" height="1.5" fill="#5a5a5a"></rect><rect x="306.5" y="696.9" width="1.5" height="1.5" fill="#cfcfcf"></rect></svg>
<div class="a" style="left:309.2px;top:592.7px;width:712.5px;height:178.6px;border:1px solid #c4c4c4;border-right:none;background:#fff"></div>
<div class="a" style="left:138px;top:592.7px;width:886px;height:1px;background:#cfcfcf"></div>
<div class="a" style="left:310.2px;top:593.7px;width:712px;height:178.6px;overflow:hidden" id="flist">
<svg style="left:3.8px;top:21.6px" width="15" height="12.3" viewBox="0 0 15 12.6" preserveAspectRatio="none"><path d="M0 1.2A1.2 1.2 0 0 1 1.2 0H5.8L7.3 1.9H0Z" fill="#f1aa10"></path><rect x="0" y="1.6" width="15" height="10.8" rx="1" fill="url(#fd)"></rect></svg>
<div class="a" style="left:0;top:36.0px;width:603.6px;height:17px;background:#f7f7f7"></div>
<svg style="left:3.8px;top:38.6px" width="15" height="12.3" viewBox="0 0 15 12.6" preserveAspectRatio="none"><path d="M0 1.2A1.2 1.2 0 0 1 1.2 0H5.8L7.3 1.9H0Z" fill="#f1aa10"></path><rect x="0" y="1.6" width="15" height="10.8" rx="1" fill="url(#fd)"></rect></svg>
<svg style="left:3.8px;top:55.6px" width="15" height="12.3" viewBox="0 0 15 12.6" preserveAspectRatio="none"><path d="M0 1.2A1.2 1.2 0 0 1 1.2 0H5.8L7.3 1.9H0Z" fill="#f1aa10"></path><rect x="0" y="1.6" width="15" height="10.8" rx="1" fill="url(#fd)"></rect></svg>
<div class="a" style="left:0;top:70.0px;width:603.6px;height:17px;background:#f7f7f7"></div>
<svg style="left:3.8px;top:72.6px" width="15" height="12.3" viewBox="0 0 15 12.6" preserveAspectRatio="none"><path d="M0 1.2A1.2 1.2 0 0 1 1.2 0H5.8L7.3 1.9H0Z" fill="#f1aa10"></path><rect x="0" y="1.6" width="15" height="10.8" rx="1" fill="url(#fd)"></rect></svg>
<svg style="left:3.8px;top:89.6px" width="15" height="12.3" viewBox="0 0 15 12.6" preserveAspectRatio="none"><path d="M0 1.2A1.2 1.2 0 0 1 1.2 0H5.8L7.3 1.9H0Z" fill="#f1aa10"></path><rect x="0" y="1.6" width="15" height="10.8" rx="1" fill="url(#fd)"></rect></svg>
<div class="a" style="left:0;top:104.0px;width:603.6px;height:17px;background:#f7f7f7"></div>
<svg style="left:3.8px;top:106.6px" width="15" height="12.3" viewBox="0 0 15 12.6" preserveAspectRatio="none"><path d="M0 1.2A1.2 1.2 0 0 1 1.2 0H5.8L7.3 1.9H0Z" fill="#f1aa10"></path><rect x="0" y="1.6" width="15" height="10.8" rx="1" fill="url(#fd)"></rect></svg>
<svg style="left:5.8px;top:124.4px" width="12" height="15" viewBox="0 0 12 15"><path d="M.6 .6H7.6L10.9 4V14.1H.6Z" fill="#fff" stroke="#7c7c7c" stroke-width="1.1"></path><path d="M7.4 .8V4.2H10.8" fill="none" stroke="#7c7c7c" stroke-width="1"></path></svg>
<div class="a" style="left:0;top:138.0px;width:603.6px;height:17px;background:#f7f7f7"></div>
<svg style="left:5.8px;top:141.4px" width="12" height="15" viewBox="0 0 12 15"><path d="M.6 .6H7.6L10.9 4V14.1H.6Z" fill="#fff" stroke="#7c7c7c" stroke-width="1.1"></path><path d="M7.4 .8V4.2H10.8" fill="none" stroke="#7c7c7c" stroke-width="1"></path></svg>
<svg style="left:5.8px;top:158.4px" width="12" height="15" viewBox="0 0 12 15"><path d="M.6 .6H7.6L10.9 4V14.1H.6Z" fill="#fff" stroke="#7c7c7c" stroke-width="1.1"></path><path d="M7.4 .8V4.2H10.8" fill="none" stroke="#7c7c7c" stroke-width="1"></path></svg>
<div class="a" style="left:0;top:172.0px;width:603.6px;height:17px;background:#f7f7f7"></div>
<svg style="left:5.8px;top:175.4px" width="12" height="15" viewBox="0 0 12 15"><path d="M.6 .6H7.6L10.9 4V14.1H.6Z" fill="#fff" stroke="#7c7c7c" stroke-width="1.1"></path><path d="M7.4 .8V4.2H10.8" fill="none" stroke="#7c7c7c" stroke-width="1"></path></svg>
</div>
<div class="t cj" style="left: 316.5px; color: rgb(31, 31, 31); letter-spacing: 0.53px; top: 594.4px;">文件名</div>
<div class="t cj" style="left: 467px; color: rgb(31, 31, 31); letter-spacing: 0.89px; top: 594.4px;">大小</div>
<div class="t cj" style="left: 538.3px; color: rgb(31, 31, 31); letter-spacing: 0.64px; top: 594.4px;">类型</div>
<div class="t cj" style="left: 614.4px; color: rgb(31, 31, 31); letter-spacing: 0.12px; top: 594.4px;">修改时间</div>
<div class="t cj" style="left: 741.3px; color: rgb(31, 31, 31); letter-spacing: 0.64px; top: 594.4px;">权限</div>
<div class="t cj" style="left: 825.8px; color: rgb(31, 31, 31); letter-spacing: 0.74px; top: 594.4px;">用户/用户组</div>
<div class="a" style="left:459.9px;top:596px;width:1px;height:14px;background:#bdbdbd"></div>
<div class="a" style="left:530.9px;top:596px;width:1px;height:14px;background:#bdbdbd"></div>
<div class="a" style="left:605.8px;top:596px;width:1px;height:14px;background:#bdbdbd"></div>
<div class="a" style="left:733.1px;top:596px;width:1px;height:14px;background:#bdbdbd"></div>
<div class="a" style="left:818.3px;top:596px;width:1px;height:14px;background:#bdbdbd"></div>
<div class="a" style="left:1011.3px;top:596px;width:1px;height:14px;background:#bdbdbd"></div>
<svg style="left:361.5px;top:600.3px" width="10" height="6" viewBox="0 0 10 6"><path d="M.3 5.4L4.7 .3L9.1 5.4Z" fill="#8f8f8f"></path></svg>
<div class="a" style="left:310.2px;top:593.7px;width:712px;height:178.6px;overflow:hidden">
<div class="t " style="left: 22.8px; font-size: 13px; color: rgb(26, 26, 26); letter-spacing: -0.25px; top: 18.01px;">.cache</div>
<div class="t cj" style="left: 229.1px; color: rgb(26, 26, 26); letter-spacing: 0.43px; top: 18.01px;">文件夹</div>
<div class="t " style="left: 305px; font-size: 13px; color: rgb(26, 26, 26); letter-spacing: 0.43px; top: 18.01px;">2026/01/19 16:32</div>
<div class="t " style="left: 431.3px; font-size: 13px; color: rgb(26, 26, 26); letter-spacing: 0.93px; top: 18.01px;">drwx------</div>
<div class="t " style="left: 517.3px; font-size: 13px; color: rgb(26, 26, 26); letter-spacing: 0.91px; top: 18.01px;">0/0</div>
<div class="t " style="left: 22.8px; font-size: 13px; color: rgb(26, 26, 26); letter-spacing: 0.26px; top: 35.01px;">.config</div>
<div class="t cj" style="left: 229.1px; color: rgb(26, 26, 26); letter-spacing: 0.43px; top: 35.01px;">文件夹</div>
<div class="t " style="left: 305px; font-size: 13px; color: rgb(26, 26, 26); letter-spacing: 0.43px; top: 35.01px;">2026/01/31 16:10</div>
<div class="t " style="left: 431.3px; font-size: 13px; color: rgb(26, 26, 26); letter-spacing: 0.93px; top: 35.01px;">drwx------</div>
<div class="t " style="left: 517.3px; font-size: 13px; color: rgb(26, 26, 26); letter-spacing: 0.91px; top: 35.01px;">0/0</div>
<div class="t " style="left: 22.8px; font-size: 13px; color: rgb(26, 26, 26); letter-spacing: 0.03px; top: 52.01px;">.pip</div>
<div class="t cj" style="left: 229.1px; color: rgb(26, 26, 26); letter-spacing: 0.43px; top: 52.01px;">文件夹</div>
<div class="t " style="left: 305px; font-size: 13px; color: rgb(26, 26, 26); letter-spacing: 0.43px; top: 52.01px;">2026/01/19 16:45</div>
<div class="t " style="left: 431.3px; font-size: 13px; color: rgb(26, 26, 26); letter-spacing: 0.58px; top: 52.01px;">drwxr-xr-x</div>
<div class="t " style="left: 517.3px; font-size: 13px; color: rgb(26, 26, 26); letter-spacing: 0.91px; top: 52.01px;">0/0</div>
<div class="t " style="left: 22.8px; font-size: 13px; color: rgb(26, 26, 26); letter-spacing: 0.24px; top: 69.01px;">.rpmdb</div>
<div class="t cj" style="left: 229.1px; color: rgb(26, 26, 26); letter-spacing: 0.43px; top: 69.01px;">文件夹</div>
<div class="t " style="left: 305px; font-size: 13px; color: rgb(26, 26, 26); letter-spacing: 0.43px; top: 69.01px;">2026/01/19 16:48</div>
<div class="t " style="left: 431.3px; font-size: 13px; color: rgb(26, 26, 26); letter-spacing: 0.58px; top: 69.01px;">drwxr-xr-x</div>
<div class="t " style="left: 517.3px; font-size: 13px; color: rgb(26, 26, 26); letter-spacing: 0.91px; top: 69.01px;">0/0</div>
<div class="t " style="left: 22.8px; font-size: 13px; color: rgb(26, 26, 26); letter-spacing: -0.51px; top: 86.01px;">.ssh</div>
<div class="t cj" style="left: 229.1px; color: rgb(26, 26, 26); letter-spacing: 0.43px; top: 86.01px;">文件夹</div>
<div class="t " style="left: 305px; font-size: 13px; color: rgb(26, 26, 26); letter-spacing: 0.43px; top: 86.01px;">2026/01/19 16:32</div>
<div class="t " style="left: 431.3px; font-size: 13px; color: rgb(26, 26, 26); letter-spacing: 0.93px; top: 86.01px;">drwx------</div>
<div class="t " style="left: 517.3px; font-size: 13px; color: rgb(26, 26, 26); letter-spacing: 0.91px; top: 86.01px;">0/0</div>
<div class="t " style="left: 22.8px; font-size: 13px; color: rgb(26, 26, 26); letter-spacing: -0.1px; top: 103.01px;">snap</div>
<div class="t cj" style="left: 229.1px; color: rgb(26, 26, 26); letter-spacing: 0.43px; top: 103.01px;">文件夹</div>
<div class="t " style="left: 305px; font-size: 13px; color: rgb(26, 26, 26); letter-spacing: 0.43px; top: 103.01px;">2026/01/19 16:32</div>
<div class="t " style="left: 431.3px; font-size: 13px; color: rgb(26, 26, 26); letter-spacing: 0.93px; top: 103.01px;">drwx------</div>
<div class="t " style="left: 517.3px; font-size: 13px; color: rgb(26, 26, 26); letter-spacing: 0.91px; top: 103.01px;">0/0</div>
<div class="t " style="left: 22.8px; font-size: 13px; color: rgb(26, 26, 26); letter-spacing: -0.13px; top: 120.01px;">.bash_history</div>
<div class="t " style="left: 193.6px; font-size: 13px; color: rgb(26, 26, 26); letter-spacing: -0.14px; top: 120.01px;">76 B</div>
<div class="t " style="left: 229.3px; font-size: 12.36px; color: rgb(26, 26, 26); letter-spacing: -0.24px; top: 120.01px;">BASH_HI...</div>
<div class="t " style="left: 305px; font-size: 13px; color: rgb(26, 26, 26); letter-spacing: 0.43px; top: 120.01px;">2026/01/31 16:19</div>
<div class="t " style="left: 432.1px; font-size: 13px; color: rgb(26, 26, 26); letter-spacing: 1.14px; top: 120.01px;">-rw-------</div>
<div class="t " style="left: 517.3px; font-size: 13px; color: rgb(26, 26, 26); letter-spacing: 0.91px; top: 120.01px;">0/0</div>
<div class="t " style="left: 22.8px; font-size: 13px; color: rgb(26, 26, 26); letter-spacing: -0.18px; top: 137.01px;">.bashrc</div>
<div class="t " style="left: 193.6px; font-size: 13px; color: rgb(26, 26, 26); letter-spacing: -0.5px; top: 137.01px;">3 KB</div>
<div class="t " style="left: 229.3px; font-size: 12.05px; color: rgb(26, 26, 26); letter-spacing: -0.16px; top: 137.01px;">BASHRC ...</div>
<div class="t " style="left: 305px; font-size: 13px; color: rgb(26, 26, 26); letter-spacing: 0.43px; top: 137.01px;">2021/10/15 18:06</div>
<div class="t " style="left: 432.1px; font-size: 13px; color: rgb(26, 26, 26); letter-spacing: 0.92px; top: 137.01px;">-rw-r--r--</div>
<div class="t " style="left: 517.3px; font-size: 13px; color: rgb(26, 26, 26); letter-spacing: 0.91px; top: 137.01px;">0/0</div>
<div class="t " style="left: 22.8px; font-size: 13px; color: rgb(26, 26, 26); letter-spacing: 0.13px; top: 154.01px;">.profile</div>
<div class="t " style="left: 186.5px; font-size: 13px; color: rgb(26, 26, 26); letter-spacing: -0.14px; top: 154.01px;">161 B</div>
<div class="t " style="left: 229.3px; font-size: 12.05px; color: rgb(26, 26, 26); letter-spacing: -0.27px; top: 154.01px;">PROFILE ...</div>
<div class="t " style="left: 305px; font-size: 13px; color: rgb(26, 26, 26); letter-spacing: 0.43px; top: 154.01px;">2019/07/09 18:05</div>
<div class="t " style="left: 432.1px; font-size: 13px; color: rgb(26, 26, 26); letter-spacing: 0.92px; top: 154.01px;">-rw-r--r--</div>
<div class="t " style="left: 517.3px; font-size: 13px; color: rgb(26, 26, 26); letter-spacing: 0.91px; top: 154.01px;">0/0</div>
<div class="t " style="left: 22.8px; font-size: 13px; color: rgb(26, 26, 26); letter-spacing: 0.13px; top: 171.01px;">.pydistutils.cfg</div>
<div class="t " style="left: 193.6px; font-size: 13px; color: rgb(26, 26, 26); letter-spacing: -0.14px; top: 171.01px;">72 B</div>
<div class="t " style="left: 229.3px; font-size: 11.45px; color: rgb(26, 26, 26); letter-spacing: -0.23px; top: 171.01px;">CFG 文件</div>
<div class="t " style="left: 305px; font-size: 13px; color: rgb(26, 26, 26); letter-spacing: 0.43px; top: 171.01px;">2026/01/19 16:45</div>
<div class="t " style="left: 432.1px; font-size: 13px; color: rgb(26, 26, 26); letter-spacing: 0.92px; top: 171.01px;">-rw-r--r--</div>
<div class="t " style="left: 517.3px; font-size: 13px; color: rgb(26, 26, 26); letter-spacing: 0.91px; top: 171.01px;">0/0</div>
</div>
<div class="a" style="left:1014px;top:613.6px;width:7px;height:147px;background:#dbdbdb"></div>
</div></div></body></html>
